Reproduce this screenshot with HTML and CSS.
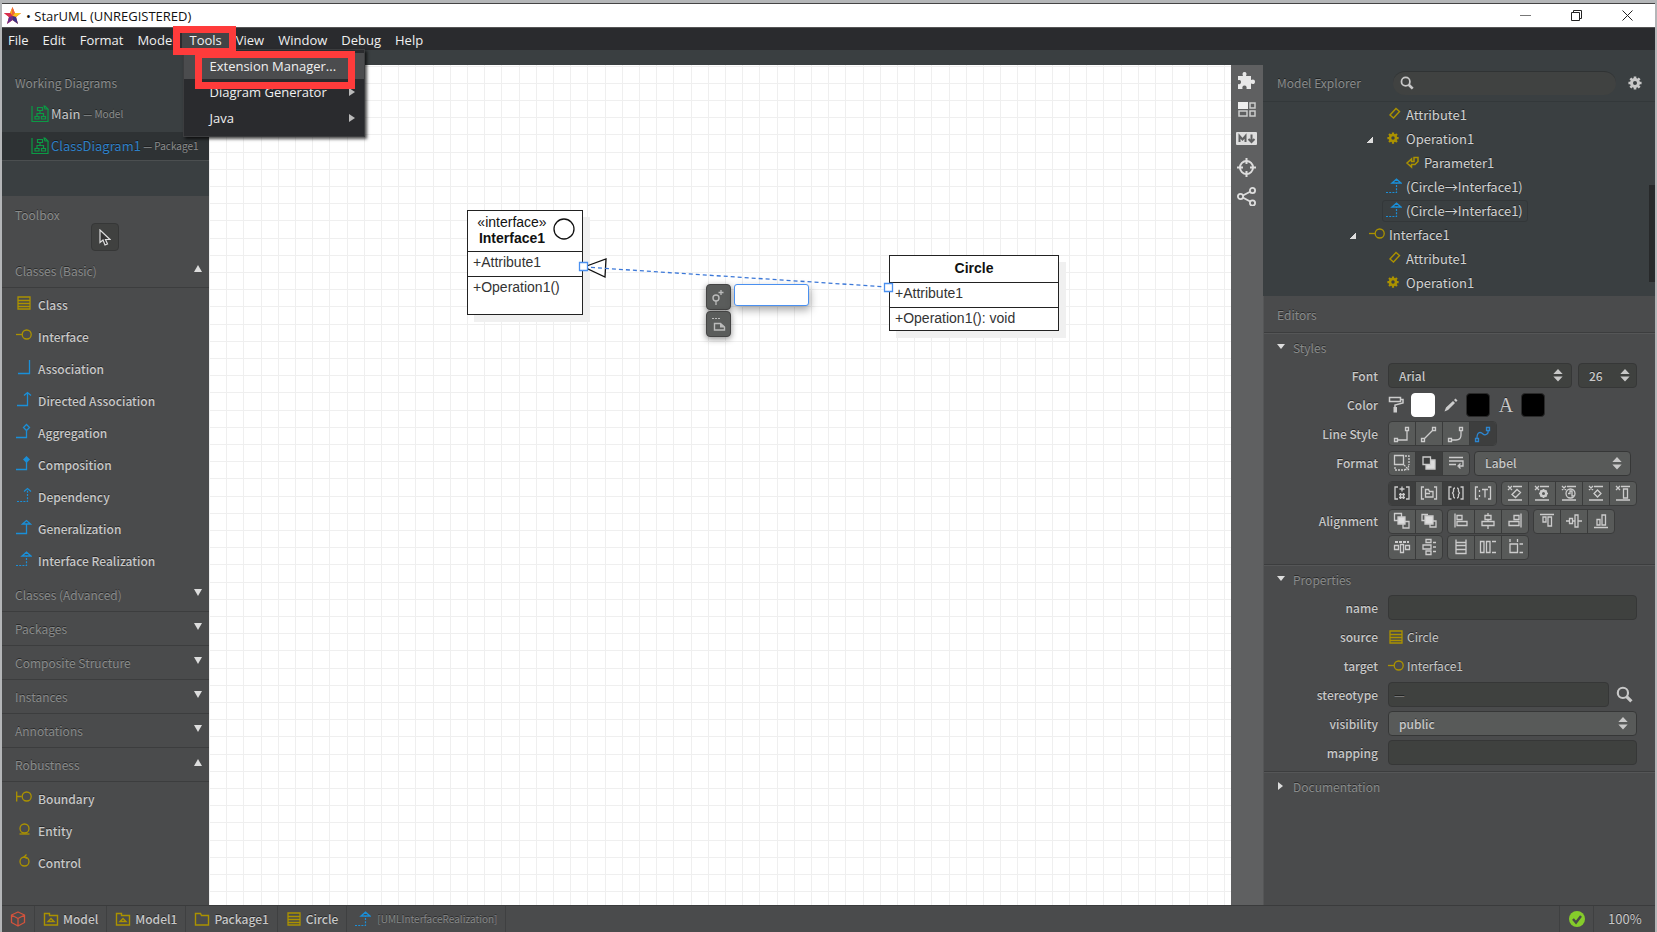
FILE: index.html
```html
<!DOCTYPE html>
<html lang="en">
<head>
<meta charset="utf-8">
<title>StarUML (UNREGISTERED)</title>
<link rel="stylesheet" href="styles.css">
</head>
<body>
<svg class="defs" aria-hidden="true">
  <symbol id="i-class" viewBox="0 0 16 16"><path d="M2 2h12v12H2zM2 5.500h12M2 8.500h12M2 11.500h12" fill="none" stroke="currentColor" stroke-width="1.300"/></symbol>
  <symbol id="i-iface" viewBox="0 0 16 16"><path d="M0 7.500h6" stroke="currentColor" stroke-width="1.300"/><circle cx="10.700" cy="7.500" r="4.500" fill="none" stroke="currentColor" stroke-width="1.300"/></symbol>
  <symbol id="i-assoc" viewBox="0 0 16 16"><path d="M2 14.500h11.500V1" fill="none" stroke="currentColor" stroke-width="1.300"/></symbol>
  <symbol id="i-dirassoc" viewBox="0 0 16 16"><path d="M1 14.500h10.500V1.500M8 4.500l3.500-3 3.500 3" fill="none" stroke="currentColor" stroke-width="1.300"/></symbol>
  <symbol id="i-aggr" viewBox="0 0 16 16"><path d="M0 14.500h10.500V7.500M10.500 1.500l3 3-3 3-3-3z" fill="none" stroke="currentColor" stroke-width="1.300"/></symbol>
  <symbol id="i-comp" viewBox="0 0 16 16"><path d="M0 14.500h10.500V7" fill="none" stroke="currentColor" stroke-width="1.300"/><path d="M10.500 1l3.500 3.500-3.500 3.500L7 4.500z" fill="currentColor"/></symbol>
  <symbol id="i-dep" viewBox="0 0 16 16"><path d="M1 14.500h10.500V3" fill="none" stroke="currentColor" stroke-width="1.200" stroke-dasharray="2 1.200"/><path d="M8 4.500l3.500-3 3.500 3" fill="none" stroke="currentColor" stroke-width="1.200"/></symbol>
  <symbol id="i-gen" viewBox="0 0 16 16"><path d="M0 14.500h10.500V5M6.500 5l4-3.500 4 3.500z" fill="none" stroke="currentColor" stroke-width="1.300"/></symbol>
  <symbol id="i-real" viewBox="0 0 16 16"><path d="M0 14.500h10.500V5" fill="none" stroke="currentColor" stroke-width="1.200" stroke-dasharray="2 1.200"/><path d="M6 5l4.500-3.800L15 5z" fill="none" stroke="currentColor" stroke-width="1.300"/></symbol>
  <symbol id="i-bound" viewBox="0 0 16 16"><path d="M.7 2.500v10M.7 7.500h5" stroke="currentColor" stroke-width="1.300"/><circle cx="10.700" cy="7.500" r="4.500" fill="none" stroke="currentColor" stroke-width="1.300"/></symbol>
  <symbol id="i-entity" viewBox="0 0 16 16"><path d="M3.500 13h10" stroke="currentColor" stroke-width="1.300"/><circle cx="8.500" cy="7.500" r="4.500" fill="none" stroke="currentColor" stroke-width="1.300"/></symbol>
  <symbol id="i-control" viewBox="0 0 16 16"><path d="M10.500 1.500L8 4l3 1.500" fill="none" stroke="currentColor" stroke-width="1.300"/><circle cx="8.500" cy="8.500" r="4.500" fill="none" stroke="currentColor" stroke-width="1.300"/></symbol>
  <symbol id="i-diagram" viewBox="0 0 18 18"><path d="M1 1v15.500h16V4M13 1h1l3 3h-3z" fill="none" stroke="currentColor" stroke-width="1.200"/><path d="M6.500 2.500h5v3h-5zM4 11.500h4v2.500H4zM10.500 11.500h4v2.500h-4zM9 5.500v3M6 11.500v-3h6.500v3" fill="none" stroke="currentColor" stroke-width="1.200"/></symbol>
  <symbol id="i-attr" viewBox="0 0 16 16"><path d="M4 9l6-6.500 3.500 3-6 6.500z" fill="none" stroke="currentColor" stroke-width="1.400"/></symbol>
  <symbol id="i-gear" viewBox="0 0 16 16"><circle cx="8" cy="8" r="4" fill="none" stroke="currentColor" stroke-width="3.400"/><path d="M8 .5v3M8 12.500v3M.5 8h3M12.500 8h3M2.700 2.700l2 2M11.300 11.300l2 2M2.700 13.300l2-2M11.300 4.700l2-2" stroke="currentColor" stroke-width="3"/></symbol>
  <symbol id="i-param" viewBox="0 0 16 16"><path d="M3 9l4.500-4v2.500h2.500V3.500h4v4l-3 3H7.500V13z" fill="none" stroke="currentColor" stroke-width="1.500"/></symbol>
  <symbol id="i-search" viewBox="0 0 16 16"><circle cx="6.500" cy="6.500" r="4.800" fill="none" stroke="currentColor" stroke-width="2"/><path d="M10 10l4.500 4.500" stroke="currentColor" stroke-width="3"/></symbol>
  <symbol id="i-model" viewBox="0 0 16 16"><path d="M1.500 2.500h5v2h8v9.500h-13zM5 10.500L8 7.500l3 3z" fill="none" stroke="currentColor" stroke-width="1.400"/></symbol>
  <symbol id="i-package" viewBox="0 0 16 16"><path d="M1.500 14V2.500h5l1 2h7V14z" fill="none" stroke="currentColor" stroke-width="1.400"/></symbol>
  <symbol id="i-cube" viewBox="0 0 16 16"><path d="M8 1l6.500 3v7.500L8 15l-6.500-3.500V4zM1.500 4L8 7.500 14.500 4M8 7.500V15" fill="none" stroke="currentColor" stroke-width="1.300" stroke-linejoin="round"/></symbol>
  <symbol id="i-updown" viewBox="0 0 10 14"><path d="M0 5.500L5 0l5 5.500zM0 8l5 5.500L10 8z" fill="currentColor"/></symbol>
</svg>

<header class="titlebar">
  <svg class="logo" width="17" height="17" viewBox="0 0 17 17"><path d="M8.500 0l2.300 6H17l-5 4 2 7-5.500-4L3 17l2-7-5-4h6.200z" fill="#e8382d"/><path d="M8.500 0v9L6 6z" fill="#f6a21b"/><path d="M8.500 0l2.300 6-2.300 3z" fill="#f06a3a"/><path d="M0 6h6.200l2.300 3L5 10z" fill="#d9304f"/><path d="M17 6h-6.200L8.500 9l3.500 1z" fill="#f7c51f"/><path d="M3 17l2-7 3.500-1v4z" fill="#6a2d8c"/><path d="M14 17l-2-7-3.500-1v4z" fill="#3c3285"/></svg>
  <h1 class="title">• StarUML (UNREGISTERED)</h1>
  <div class="winbtns">
    <button aria-label="Minimize"><svg width="11" height="11"><path d="M0 5.500h11" stroke="#777"/></svg></button>
    <button aria-label="Restore"><svg width="11" height="11"><path d="M.5 2.500h8v8h-8zM2.500 2.500v-2h8v8h-2" fill="none" stroke="#222"/></svg></button>
    <button aria-label="Close"><svg width="11" height="11"><path d="M.5.500l10 10M10.500.500l-10 10" stroke="#222"/></svg></button>
  </div>
</header>

<nav class="menubar">
  <div><button>File</button></div>
  <div><button>Edit</button></div>
  <div><button>Format</button></div>
  <div><button>Model</button></div>
  <div class="open"><button>Tools</button>
    <div class="dropdown">
      <button class="hot">Extension Manager...</button>
      <button>Diagram Generator<svg width="6" height="8"><path d="M0 0l6 4-6 4z" fill="#bbb"/></svg></button>
      <button>Java<svg width="6" height="8"><path d="M0 0l6 4-6 4z" fill="#bbb"/></svg></button>
      <span class="mark mark-item"></span>
    </div>
    <span class="mark mark-menu"></span>
  </div>
  <div><button>View</button></div>
  <div><button>Window</button></div>
  <div><button>Debug</button></div>
  <div><button>Help</button></div>
</nav>

<div class="work">
  <aside class="left">
    <section class="diagrams">
      <h2>Working Diagrams</h2>
      <a href="#" class="wd"><svg class="green"><use href="#i-diagram"/></svg>Main <small>— Model</small></a>
      <a href="#" class="wd on"><svg class="green"><use href="#i-diagram"/></svg><b>ClassDiagram1</b><small> — Package1</small></a>
    </section>
    <section class="toolbox">
      <h2>Toolbox</h2>
      <button class="pointer" aria-label="Select"><svg width="12" height="17"><path d="M1 1v12.500l3-2.500 2 5 2.500-1-2-4.500H11z" fill="#333" stroke="#ddd" stroke-width="1.200"/></svg></button>
      <button class="acc up">Classes (Basic)</button>
      <div class="tools">
        <button><svg class="gold"><use href="#i-class"/></svg>Class</button>
        <button><svg class="gold"><use href="#i-iface"/></svg>Interface</button>
        <button><svg class="blue"><use href="#i-assoc"/></svg>Association</button>
        <button><svg class="blue"><use href="#i-dirassoc"/></svg>Directed Association</button>
        <button><svg class="blue"><use href="#i-aggr"/></svg>Aggregation</button>
        <button><svg class="blue"><use href="#i-comp"/></svg>Composition</button>
        <button><svg class="blue"><use href="#i-dep"/></svg>Dependency</button>
        <button><svg class="blue"><use href="#i-gen"/></svg>Generalization</button>
        <button><svg class="blue"><use href="#i-real"/></svg>Interface Realization</button>
      </div>
      <button class="acc">Classes (Advanced)</button>
      <button class="acc">Packages</button>
      <button class="acc">Composite Structure</button>
      <button class="acc">Instances</button>
      <button class="acc">Annotations</button>
      <button class="acc up">Robustness</button>
      <div class="tools">
        <button><svg class="gold"><use href="#i-bound"/></svg>Boundary</button>
        <button><svg class="gold"><use href="#i-entity"/></svg>Entity</button>
        <button><svg class="gold"><use href="#i-control"/></svg>Control</button>
      </div>
    </section>
  </aside>

  <main class="canvas">
    <svg class="layer">
      <defs><pattern id="grid" width="86" height="86" patternUnits="userSpaceOnUse"><path d="M17.500 0v86M34.500 0v86M52.500 0v86M69.500 0v86M.5 0v86M0 18.500h86M0 35.500h86M0 52.500h86M0 69.500h86M0 1.500h86" stroke="#efefef"/></pattern></defs>
      <rect width="100%" height="100%" fill="url(#grid)"/>
    </svg>
    <article class="node iface">
      <header><span>«interface»</span><strong>Interface1</strong></header>
      <svg class="lolly" width="22" height="22"><circle cx="11" cy="11" r="10" fill="#fff" stroke="#111" stroke-width="1.300"/></svg>
      <p>+Attribute1</p>
      <p>+Operation1()</p>
    </article>
    <article class="node circle">
      <header><strong>Circle</strong></header>
      <p>+Attribute1</p>
      <p>+Operation1(): void</p>
    </article>
    <svg class="layer">
      <path d="M375 202L397 194L396 212Z" fill="#fff" stroke="#111" stroke-width="1.300"/>
      <path d="M375 202L679 222" stroke="#3c78d8" stroke-width="1.300" stroke-dasharray="4 3"/>
      <path d="M370.500 197.500h8v8h-8zM675.500 218.500h8v8h-8z" fill="#fff" stroke="#4a90f0" stroke-width="1.300"/>
    </svg>
    <div class="quick">
      <div class="quick-btns">
        <button aria-label="Visibility"><svg width="17" height="17"><circle cx="6" cy="9" r="3" fill="none" stroke="#bbb" stroke-width="1.400"/><path d="M6 12v4M11 1v5M8.500 3.500h5" stroke="#bbb" stroke-width="1.300"/></svg></button>
        <button aria-label="Add note"><svg width="17" height="17"><path d="M2 2.500h9" stroke="#bbb" stroke-dasharray="2 1"/><path d="M4.500 7.500h6l4 3.500v3h-10z" fill="none" stroke="#bbb" stroke-width="1.400"/><path d="M10 7l5 4.500h-5z" fill="#bbb"/></svg></button>
      </div>
      <input type="text" aria-label="Name">
    </div>
  </main>

  <nav class="rail">
    <button aria-label="Extensions"><svg width="19" height="19" viewBox="0 0 19 19"><path d="M1 5h5c-1-2-.5-4 1.500-4S10 3 9 5h5v4c2-1 4-.5 4 1.700s-2 2.800-4 1.800V18h-4.500c.5-2-.2-3.500-2-3.500S5 16 5.500 18H1v-5c2 .8 3-.3 3-2s-1-2.500-3-1.800z" fill="#e8e8e8"/></svg></button>
    <button aria-label="Thumbnails"><svg width="18" height="15"><path d="M0 0h10v7H0z" fill="#eee"/><path d="M12 1h5v5h-5zM1 9h8v5H1zM12 9h5v5h-5z" fill="none" stroke="#ccc" stroke-width="1.500"/></svg></button>
    <button aria-label="Markdown"><svg width="21" height="13"><rect width="21" height="13" rx="1" fill="#ddd"/><path d="M3.500 10V4L6.500 7.500 9.500 4v6" fill="none" stroke="#5f6061" stroke-width="2"/><path d="M15.500 2.500v6M12.500 7l3 3 3-3" fill="none" stroke="#5f6061" stroke-width="2"/></svg></button>
    <button aria-label="Locate"><svg width="19" height="19"><circle cx="9.500" cy="9.500" r="6.500" fill="none" stroke="#ddd" stroke-width="2"/><path d="M9.500 0v6M9.500 13v6M0 9.500h6M13 9.500h6" stroke="#ddd" stroke-width="2"/></svg></button>
    <button aria-label="Relationships"><svg width="19" height="19"><path d="M14.500 4L4 9.500l11 6" fill="none" stroke="#ddd" stroke-width="1.800"/><g fill="#5f6061" stroke="#ddd" stroke-width="1.800"><circle cx="15.500" cy="3.500" r="2.600"/><circle cx="3.500" cy="9.500" r="2.600"/><circle cx="15.500" cy="16" r="2.600"/></g></svg></button>
  </nav>

  <aside class="right">
    <section class="explorer">
      <div class="ex-head">
        <h2>Model Explorer</h2>
        <label class="search"><svg width="14" height="14"><use href="#i-search"/></svg><input type="text" aria-label="Search model"></label>
        <button class="plain" aria-label="Settings"><svg width="14" height="14"><use href="#i-gear"/></svg></button>
      </div>
      <ul class="tree">
        <li class="d2"><i></i><svg class="gold"><use href="#i-attr"/></svg>Attribute1</li>
        <li class="d2"><i class="tri"></i><svg class="gold small"><use href="#i-gear"/></svg>Operation1</li>
        <li class="d3"><i></i><svg class="gold"><use href="#i-param"/></svg>Parameter1</li>
        <li class="d2"><i></i><svg class="blue"><use href="#i-real"/></svg>(Circle→Interface1)</li>
        <li class="d2"><i></i><span class="sel"><svg class="blue"><use href="#i-real"/></svg>(Circle→Interface1)</span></li>
        <li class="d1"><i class="tri"></i><svg class="gold"><use href="#i-iface"/></svg>Interface1</li>
        <li class="d2"><i></i><svg class="gold"><use href="#i-attr"/></svg>Attribute1</li>
        <li class="d2"><i></i><svg class="gold small"><use href="#i-gear"/></svg>Operation1</li>
      </ul>
      <span class="thumb"></span>
    </section>

    <section class="editors">
      <h2 class="ed-title">Editors</h2>
      <details open>
        <summary>Styles</summary>
        <div class="row"><label for="font">Font</label>
          <span class="pick dark grow"><select id="font"><option>Arial</option></select><svg><use href="#i-updown"/></svg></span>
          <span class="pick dark num"><input id="size" type="text" value="26" aria-label="Font size"><svg><use href="#i-updown"/></svg></span></div>
        <div class="row"><span class="lab">Color</span>
          <div class="colors">
            <svg width="16" height="17"><path d="M1.500 1.500h11v4h-11zM12.500 3.500H15v3.500l-8 2v2.500" fill="none" stroke="#ccc" stroke-width="1.500"/><path d="M5.500 11h3.500v5.500H5.500z" fill="#ccc"/></svg>
            <button class="swatch white" aria-label="Fill color"></button>
            <svg width="16" height="16"><path d="M1.500 14.500l1.500-4L10 4l2 2-7 7zM11 3l1.500-1.500 2 2L13 5z" fill="#ccc"/></svg>
            <button class="swatch" aria-label="Line color"></button>
            <span class="fontA">A</span>
            <button class="swatch" aria-label="Font color"></button>
          </div></div>
        <div class="row"><span class="lab">Line Style</span>
          <div class="group">
            <button aria-label="Rectilinear"><svg><path d="M1.500 13.500h3v3h-3zM12.500 2.500h3v3h-3zM5 15h9V6"/></svg></button>
            <button aria-label="Oblique"><svg><path d="M1.500 13.500h3v3h-3zM12.500 2.500h3v3h-3zM4.500 13.500l8-8"/></svg></button>
            <button aria-label="Rounded"><svg><path d="M1.500 13.500h3v3h-3zM12.500 2.500h3v3h-3zM5 15h4q5 0 5-5V6"/></svg></button>
            <button class="on act" aria-label="Curve"><svg><path d="M1.500 13.500h3v3h-3zM12.500 2.500h3v3h-3zM3 13c0-7 4-6 6-4s6 0 5-3.500"/></svg></button>
          </div></div>
        <div class="row tall"><label for="stereo">Format</label>
          <div class="group">
            <button aria-label="Auto resize"><svg><path d="M1.500 1.500h9v9h-9z"/><path d="M12 2h4v9M2 13v3h10M11 11l4 4M15.500 11.500v4h-4" stroke-dasharray="2 1"/></svg></button>
            <button class="on" aria-label="Shadow"><svg><path d="M6 6h9v9H6z" fill="#ddd"/><path d="M3 3h7.500v7.500H3z" fill="#3d3e3e"/></svg></button>
            <button aria-label="Word wrap"><svg><path d="M2 3.500h14M2 7h14v5h-4M2 10.500h7M13.500 9.500L11 12l2.500 2.500"/></svg></button>
          </div>
          <span class="pick lit wide"><select id="stereo"><option>Label</option></select><svg><use href="#i-updown"/></svg></span></div>
        <div class="row tall"><span class="lab"></span>
          <div class="group">
            <button class="on" aria-label="Show visibility"><svg><path d="M5 3H2v12h3M13 3h3v12h-3M9 2.500v5M6.500 5h5M7.500 9v6M10.500 9v6M6 10.500h6M6 13.500h6"/></svg></button>
            <button aria-label="Show namespace"><svg><path d="M4 3H1.500v12H4M14 3h2.500v12H14M5.500 13V5.500h3l1 2h3.500V13zM6 9.500h4"/></svg></button>
            <button class="on" aria-label="Show property"><svg><path d="M4.500 3H2v12h2.500M13.500 3H16v12h-2.500M8 4Q6.500 4 6.500 6v1.500L5.500 9l1 1.500V12q0 2 1.500 2M10 4q1.500 0 1.500 2v1.500l1 1.500-1 1.500V12q0 2-1.500 2"/></svg></button>
            <button aria-label="Show type"><svg><path d="M4 3H1.500v12H4M14 3h2.500v12H14M5.500 6v2M5.500 11v2M8 5.500h6M11 5.500v8"/></svg></button>
          </div>
          <div class="group">
            <button aria-label="Suppress attributes"><svg><path d="M7 2.500h9M2 16h14M2 2l4 4M6 2L2 6M6 10.500l5-5 3.500 3-5 5z"/></svg></button>
            <button aria-label="Suppress operations"><svg><path d="M7 2.500h9M2 16h14M2 2l4 4M6 2L2 6"/><circle cx="10.500" cy="9.500" r="2.700" stroke-width="2.400"/><path d="M10.500 5v9M6 9.500h2M13 9.500h2M7.500 6.500l1 1M12.500 11.500l1 1M7.500 12.500l1-1M12.500 7.500l1-1" stroke-dasharray="2 5"/></svg></button>
            <button aria-label="Suppress receptions"><svg><path d="M7 2.500h9M2 16h14M2 2l4 4M6 2L2 6M8 9.500h2V7h2v5h2"/><circle cx="10.500" cy="9.500" r="4.500"/></svg></button>
            <button aria-label="Suppress literals"><svg><path d="M7 2.500h9M2 16h14M2 2l4 4M6 2L2 6M10.500 6l3.500 3.500-3.500 3.500L7 9.500z"/></svg></button>
            <button aria-label="Suppress columns"><svg><path d="M7 2.500h9M2 16h14M2 2l4 4M6 2L2 6M9.500 5h4v9h-4z"/></svg></button>
          </div></div>
        <div class="row short"><span class="lab">Alignment</span>
          <div class="group">
            <button aria-label="Bring to front"><svg><path d="M1.500 1.500h7v7h-7zM10 9.500h6V16h-6z"/><path d="M5 5h7v7H5z" fill="#ddd"/></svg></button>
            <button aria-label="Send to back"><svg><path d="M5 4h8v8H5z" fill="#ddd"/><path d="M8 2.500H2v6h3M13 9h3v6h-6v-3"/></svg></button>
          </div>
          <div class="group">
            <button aria-label="Align left"><svg><path d="M3 1.500v14M5 3.500h5v4H5zM5 9.500h10v4H5z"/></svg></button>
            <button aria-label="Align center"><svg><path d="M9 1v2.500M9 7.500v2M9 13.500V17M6 3.500h6v4H6zM3 9.500h12v4H3z"/></svg></button>
            <button aria-label="Align right"><svg><path d="M15 1.500v14M8 3.500h5v4H8zM3 9.500h10v4H3z"/></svg></button>
          </div>
          <div class="group">
            <button aria-label="Align top"><svg><path d="M2 2.500h14M5 5h3v5H5zM10 5h3.500v9H10z"/></svg></button>
            <button aria-label="Align middle"><svg><path d="M1 9h3.500M7.500 9H10M13 9h4M4.500 6.500h3v5h-3zM10 3h3v12h-3z"/></svg></button>
            <button aria-label="Align bottom"><svg><path d="M2 15.500h14M5 7.500h3V13H5zM10 3h3.500v10H10z"/></svg></button>
          </div></div>
        <div class="row short"><span class="lab"></span>
          <div class="group">
            <button aria-label="Space equally, horizontally"><svg><path d="M1.500 7.500h4v4h-4zM7.500 6.500h3v8h-3zM12.500 7.500h4v4h-4z"/><path d="M2 4h14" stroke-dasharray="3 1" stroke-width="2"/></svg></button>
            <button aria-label="Space equally, vertically"><svg><path d="M6 1.500h5v3H6zM3 7h8v4H3zM6 13h5v3.500H6zM13 4.500h3M13 9h3M13 13.500h3"/></svg></button>
          </div>
          <div class="group">
            <button aria-label="Same width"><svg><path d="M4 1.500v3M14 1.500v3M4 4.500h10v3H4zM4 11.500h10v4H4zM4 7.500v4M14 7.500v4"/></svg></button>
            <button aria-label="Same height"><svg><path d="M1.500 3.500H5v11H1.500zM7.500 3.500H11v11H7.500zM13 3.500h4M13 14.500h4"/></svg></button>
            <button aria-label="Same size"><svg><path d="M4 1v3M11.500 1v3M4 6h7.500v8.500H4zM13.500 6H17M13.500 14.500H17"/></svg></button>
          </div></div>
      </details>
      <details open>
        <summary>Properties</summary>
        <div class="row"><label for="name">name</label><input class="field" id="name" type="text"></div>
        <div class="row"><span class="lab">source</span><a href="#" class="ref"><svg class="gold"><use href="#i-class"/></svg>Circle</a></div>
        <div class="row"><span class="lab">target</span><a href="#" class="ref"><svg class="gold"><use href="#i-iface"/></svg>Interface1</a></div>
        <div class="row"><label for="st">stereotype</label><input class="field" id="st" type="text" placeholder="—"><button class="plain find" aria-label="Find stereotype"><svg width="17" height="17"><use href="#i-search"/></svg></button></div>
        <div class="row"><label for="vis">visibility</label><span class="pick lit grow"><select id="vis"><option>public</option></select><svg><use href="#i-updown"/></svg></span></div>
        <div class="row"><label for="map">mapping</label><input class="field" id="map" type="text"></div>
      </details>
      <details class="last">
        <summary>Documentation</summary>
      </details>
    </section>
  </aside>
</div>

<footer class="status">
  <a href="#" aria-label="Project"><svg class="red"><use href="#i-cube"/></svg></a>
  <a href="#"><svg class="gold"><use href="#i-model"/></svg>Model</a>
  <a href="#"><svg class="gold"><use href="#i-model"/></svg>Model1</a>
  <a href="#"><svg class="gold"><use href="#i-package"/></svg>Package1</a>
  <a href="#"><svg class="gold"><use href="#i-class"/></svg>Circle</a>
  <a href="#" class="dim"><svg class="blue"><use href="#i-real"/></svg>[UMLInterfaceRealization]</a>
  <span class="ok"><svg><circle cx="8" cy="8" r="8" fill="#85cc2b"/><path d="M4 8l3 3.500L12 5" fill="none" stroke="#484a48" stroke-width="2.400"/></svg></span>
  <span class="zoom">100%</span>
</footer>
</body>
</html>
```
FILE: styles.css
```css
* { box-sizing: border-box; }

body {
  margin: 0;
  height: 100vh;
  display: flex;
  flex-direction: column;
  overflow: hidden;
  border: solid #b4b6b8;
  border-width: 3px 2px 0;
  background: #3a3f41;
  color: #c8c8c8;
  font: 500 12px/20px "Noto Sans CJK SC", "Noto Sans", sans-serif;
}

button, input, select {
  margin: 0;
  padding: 0;
  border: 0;
  background: none;
  color: inherit;
  font: inherit;
  text-shadow: inherit;
}

h1, h2, p, ul { margin: 0; padding: 0; font-weight: 400; }
a { color: inherit; text-decoration: none; }
svg { flex: none; display: block; }

.defs { position: absolute; width: 0; height: 0; }
.gold { color: #ab9200; }
.blue { color: #1a8fd8; }
.green { color: #0b9a45; }
.red { color: #d4533c; }

/* window frame */
.titlebar {
  display: flex;
  align-items: center;
  height: 25px;
  padding-left: 2px;
  border-top: 1px solid #444;
  border-bottom: 1px solid #555;
  background: #fff;
  color: #111;
}
.title { flex: 1; margin-left: 5px; font: 400 13px/20px "Open Sans", "Noto Sans", sans-serif; }
.winbtns { display: flex; gap: 5px; padding-right: 5px; }
.winbtns button { width: 46px; height: 20px; display: grid; place-items: center; }

.menubar {
  display: flex;
  height: 22px;
  background: #2a2b2e;
  color: #f0f0f0;
  font: 400 13px/22px "Open Sans", "Noto Sans", sans-serif;
}
.menubar > div > button { padding: 1px 7px 0; height: 22px; }
.menubar > div:first-child > button { padding-left: 6px; }
.open { position: relative; z-index: 5; }
.open > button { background: #434446; }
.dropdown {
  position: absolute;
  left: 1px;
  top: 21px;
  width: 182px;
  padding: 3px 0 5px;
  background: #2a2b2e;
  border: 1px solid #3c3d3f;
  box-shadow: 2px 2px 3px rgba(0, 0, 0, .7);
}
.dropdown button {
  display: flex;
  width: 100%;
  height: 26px;
  padding: 0 9px 0 25px;
  align-items: center;
  justify-content: space-between;
}
.dropdown .hot { background: #4b4c4e; }
.mark { position: absolute; border: 7px solid #ff3b3b; pointer-events: none; }
.mark-menu { left: -9px; top: -2px; width: 63px; height: 29px; }
.mark-item { left: 11px; top: 1px; width: 160px; height: 38px; }

/* main area */
.work { flex: 1; min-height: 0; display: flex; padding-top: 15px; text-shadow: 0 -1px 0 rgba(0, 0, 0, .45); }
.left { width: 207px; display: flex; flex-direction: column; }
.left h2, .right h2 { font-size: 12px; line-height: 20px; color: #898b8b; }
.diagrams { height: 131px; flex: none; padding-top: 8px; }
.diagrams h2 { padding: 0 13px 6px; }
.wd { display: flex; align-items: center; height: 33px; padding: 0 0 3px 29px; white-space: pre; font-weight: 400; font-size: 13px; }
.wd svg { width: 18px; height: 18px; margin-right: 2px; }
.wd b { font-weight: 400; color: #2d7fc6; font-size: 13px; }
.wd small { font-size: 10px; color: #8b8d8d; }
.wd.on { height: 29px; padding-bottom: 0; background: #2e3234; border-bottom: 1px solid #4b4f50; }

.toolbox { flex: 1; background: #4a4b4c; display: flex; flex-direction: column; }
.toolbox h2 { padding: 9px 13px 0; height: 27px; }
.pointer {
  width: 28px;
  height: 28px;
  margin: 0 0 3px 89px;
  border: 1px solid #363737;
  border-radius: 4px;
  background: #404140;
  display: grid;
  place-items: center;
}
.acc {
  display: flex;
  justify-content: space-between;
  align-items: center;
  height: 34px;
  padding: 0 7px 0 13px;
  border-bottom: 1px solid #3c3d3e;
  color: #898b8b;
  font-weight: 400;
}
.acc::after {
  content: "";
  margin-bottom: 5px;
  border: solid transparent;
  border-width: 7px 4px 0;
  border-top-color: #ddd;
}
.acc.up::after { border-width: 0 4px 7px; border-bottom-color: #ddd; }
.tools { padding: 1px 0; }
.tools button { display: flex; align-items: center; width: 100%; height: 32px; padding-left: 14px; }
.tools svg { width: 16px; height: 16px; margin: 0 6px 5px 0; }

/* diagram canvas */
.canvas { position: relative; flex: 1; background: #fff; overflow: hidden; text-shadow: none; color: #111; }
.layer { position: absolute; left: 0; top: 0; width: 100%; height: 100%; }
.node {
  position: absolute;
  border: 1px solid #222;
  background: #fff;
  box-shadow: 7px 7px 0 #f0f0f0;
  font: 14px/16px "Liberation Sans", Arial, sans-serif;
}
.node header { display: flex; flex-direction: column; align-items: center; }
.node p { border-top: 1px solid #222; padding: 2px 5px 6px; color: #333; }
.iface { left: 258px; top: 145px; width: 116px; height: 105px; }
.iface header { padding: 3px 26px 5px 0; }
.lolly { position: absolute; right: 7px; top: 7px; }
.circle { left: 680px; top: 190px; width: 170px; height: 76px; }
.circle header { padding: 4px 0 6px; }
.quick { position: absolute; left: 497px; top: 219px; display: flex; gap: 3px; align-items: flex-start; }
.quick-btns { display: grid; gap: 1px; }
.quick-btns button {
  width: 25px;
  height: 26px;
  display: grid;
  place-items: center;
  border: 1px solid #444;
  border-radius: 4px;
  background: #5a5c5b;
  box-shadow: 0 2px 6px rgba(0, 0, 0, .45);
}
.quick input {
  width: 75px;
  height: 22px;
  border: 1px solid #4a90f0;
  border-radius: 3px;
  background: #fff;
  box-shadow: 1px 4px 8px rgba(0, 0, 0, .35);
}

.rail { width: 32px; background: #5f6061; display: flex; flex-direction: column; align-items: center; padding: 1px 1px 0 0; }
.rail button { height: 29px; display: grid; place-items: center; }

/* right column */
.right { width: 392px; display: flex; flex-direction: column; }
.explorer { position: relative; flex: none; height: 231px; }
.ex-head { display: flex; align-items: center; height: 37px; padding: 0 13px 0 14px; border-bottom: 1px solid #33383a; }
.ex-head h2 { width: 116px; }
.search {
  flex: 1;
  display: flex;
  align-items: center;
  height: 24px;
  margin-right: 12px;
  padding: 0 0 2px 7px;
  border-radius: 12px;
  background: #404241;
  border-top: 1px solid #303334;
}
.search input { flex: 1; min-width: 0; }
.tree { list-style: none; padding-top: 1px; font-size: 13px; font-weight: 400; color: #d2d2d2; }
.tree li { display: flex; align-items: center; height: 24px; }
.tree svg { width: 16px; height: 16px; margin: 0 4px 3px 0; }
.tree .small { width: 12px; height: 12px; margin-left: 1px; margin-right: 7px; }
.tree .d1 { padding-left: 86px; }
.tree .d2 { padding-left: 103px; }
.tree .d3 { padding-left: 121px; }
.tree i { width: 20px; height: 7px; }
.tree .tri::before { content: ""; display: block; width: 7px; height: 7px; background: linear-gradient(135deg, transparent 50%, #ddd 50%); }
.sel { display: flex; align-items: center; height: 22px; margin-left: -4px; padding: 0 4px 0 3px; border: 1px solid #333739; border-radius: 3px; }
.thumb { position: absolute; right: 0; top: 120px; width: 6px; height: 97px; background: #27292a; }

.editors { flex: 1; background: #4a4b4c; border-left: 1px solid #555657; }
.editors .ed-title { padding: 9px 13px 7px; height: 37px; border-bottom: 1px solid #3c3d3e; }
details { border-top: 1px solid #555657; border-bottom: 1px solid #3c3d3e; padding-bottom: 4px; }
details.last { border-bottom: 0; }
summary {
  display: flex;
  align-items: center;
  height: 27px;
  padding: 1px 0 0 13px;
  color: #898b8b;
  font-weight: 400;
  list-style: none;
}
summary::before {
  content: "";
  width: 0;
  margin: 0 8px 4px 0;
  border: solid transparent;
  border-width: 5px 4px 0;
  border-top-color: #ddd;
}
.last summary::before { margin: 0 10px 2px 1px; border-width: 4px 0 4px 5px; border-color: transparent transparent transparent #ddd; }
.row { display: flex; align-items: center; gap: 4px; height: 29px; padding-right: 18px; }
.row.tall { height: 30px; }
.row.short { height: 26px; }
.row > label, .lab { width: 114px; margin-right: 6px; text-align: right; }
.pick, .field { border: 1px solid #363737; border-radius: 4px; height: 25px; }
.pick { position: relative; display: flex; }
.dark, .field { background: #3f413f; }
.lit { background: #585a59; }
.pick select, .pick input { width: 100%; padding-left: 10px; appearance: none; }
.pick svg { position: absolute; right: 8px; top: 5px; width: 10px; height: 13px; pointer-events: none; }
.grow { flex: 1; }
.num { width: 59px; margin-left: 2px; }
.num svg { right: 6px; }
.wide { width: 157px; }
.field { flex: 1; min-width: 0; padding-left: 5px; }
.field::placeholder { color: #777; opacity: 1; }
.find { margin: 0 4px 0 3px; }
.colors { display: flex; align-items: center; gap: 7px; }
.swatch { width: 24px; height: 24px; margin-right: 1px; border-radius: 4px; background: #000; border: 1px solid #2a2a2a; }
.swatch.white { background: #fff; border-color: #fff; }
.fontA { width: 16px; text-align: center; font: 20px/20px "Liberation Serif", serif; }
.group { display: flex; border: 1px solid #3a3b3b; border-radius: 4px; background: #585a59; overflow: hidden; }
.group button { width: 27px; height: 23px; display: grid; place-items: center; border-left: 1px solid #3a3b3b; }
.group button:first-child { width: 26px; border-left: 0; }
.group svg { width: 18px; height: 18px; fill: none; stroke: #ccc; stroke-width: 1.300; }
.group .on { background: #3d3e3e; }
.group .act svg { stroke: #2d86d0; }
.ref { display: flex; align-items: center; gap: 3px; font-weight: 400; }
.ref svg { width: 16px; height: 16px; }

/* status bar */
.status {
  display: flex;
  height: 27px;
  border-top: 1px solid #3a3b3c;
  background: #4a4b4c;
  text-shadow: 0 -1px 0 rgba(0, 0, 0, .45);
}
.status > * { display: flex; align-items: center; gap: 4px; padding: 0 8px 0 8px; border-right: 1px solid #3f4041; }
.status svg { width: 16px; height: 16px; }
.status .dim { font-size: 10px; font-weight: 400; color: #868888; gap: 6px; }
.status .ok { margin-left: auto; padding-left: 9px; border-left: 1px solid #3f4041; }
.status .zoom { width: 61px; padding: 0 0 0 14px; border: 0; font-size: 13px; font-weight: 400; }
```
